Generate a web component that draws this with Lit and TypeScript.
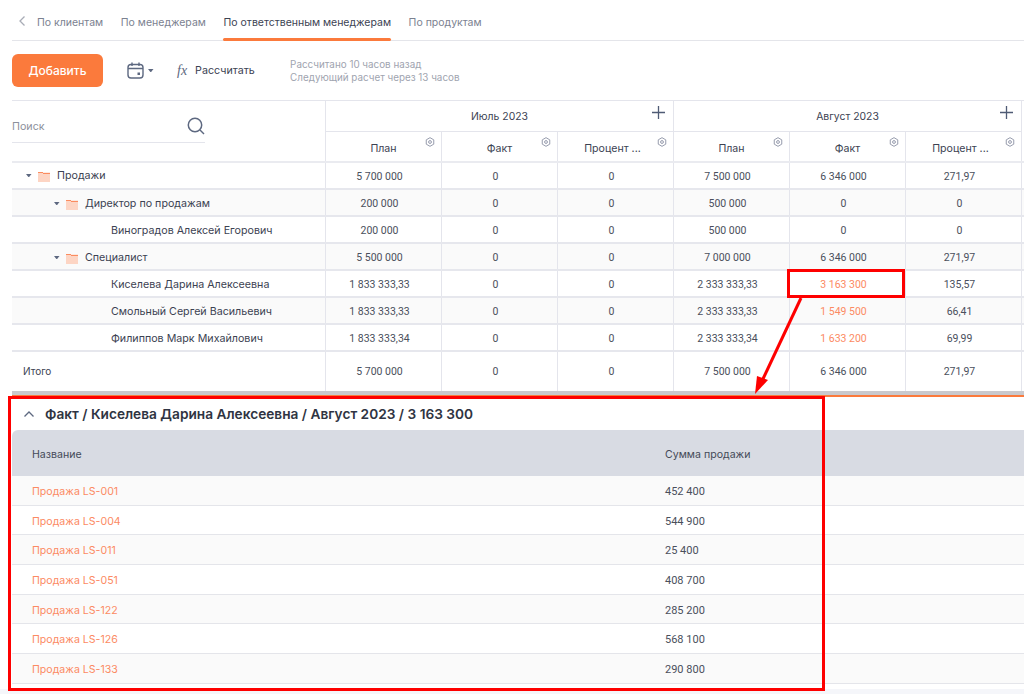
import { LitElement, html, css, svg } from "lit";
import { customElement } from "lit/decorators.js";

const rows = [
  { name: "Продажи", level: 0, folder: true, v: ["5 700 000", "0", "0", "7 500 000", "6 346 000", "271,97"] },
  { name: "Директор по продажам", level: 1, folder: true, v: ["200 000", "0", "0", "500 000", "0", "0"] },
  { name: "Виноградов Алексей Егорович", level: 2, folder: false, v: ["200 000", "0", "0", "500 000", "0", "0"] },
  { name: "Специалист", level: 1, folder: true, v: ["5 500 000", "0", "0", "7 000 000", "6 346 000", "271,97"] },
  { name: "Киселева Дарина Алексеевна", level: 2, folder: false, v: ["1 833 333,33", "0", "0", "2 333 333,33", "3 163 300", "135,57"], link: true },
  { name: "Смольный Сергей Васильевич", level: 2, folder: false, v: ["1 833 333,33", "0", "0", "2 333 333,33", "1 549 500", "66,41"], link: true },
  { name: "Филиппов Марк Михайлович", level: 2, folder: false, v: ["1 833 333,34", "0", "0", "2 333 333,34", "1 633 200", "69,99"], link: true },
];
const sales = [
  ["Продажа LS-001", "452 400"],
  ["Продажа LS-004", "544 900"],
  ["Продажа LS-011", "25 400"],
  ["Продажа LS-051", "408 700"],
  ["Продажа LS-122", "285 200"],
  ["Продажа LS-126", "568 100"],
  ["Продажа LS-133", "290 800"],
];

const gear = html`<svg class="gear" viewBox="0 0 12 12" width="10" height="10" fill="none" stroke="#8d93a5" stroke-width="1.100"><path d="M6 0.800l4.500 2.600v5.200L6 11.200 1.500 8.600V3.400z"/><circle cx="6" cy="6" r="1.700"/></svg>`;
const plus = html`<svg class="plus" viewBox="0 0 13 13" width="13" height="13" stroke="#4f5b75" stroke-width="1.300"><path d="M6.500 0v13M0 6.500h13"/></svg>`;
const caret = html`<svg class="caret" viewBox="0 0 8 5" width="5.500" height="3.500" fill="#5d6880"><path d="M0 0h8L4 5z"/></svg>`;
const folder = html`<svg class="folder" viewBox="0 0 12 10" width="12" height="10"><rect x="0" y="0.500" width="12" height="9.500" fill="#fdd5c4"/><rect x="0" y="0" width="5" height="1" fill="#fb8c60"/><rect x="5" y="1" width="7" height="1" fill="#fb8c60"/></svg>`;

@customElement("app-root")
export class AppRoot extends LitElement {
  static styles = css`
    :host { display: block; position: relative; width: 1024px; height: 694px; overflow: hidden; background: #fff;
      font-family: Inter, "Liberation Sans", sans-serif; font-size: 10.700px; color: #3c4252; }
    .tabs { display: flex; align-items: flex-start; height: 40px; margin-left: 12px; border-bottom: 1px solid #e4e5ea; }
    .back { width: 25px; padding: 16px 0 0 7px; box-sizing: border-box; }
    .tab { padding-top: 15px; margin-right: 17.600px; height: 40px; box-sizing: border-box; color: #7b8190; font-size: 10.500px; line-height: 15px; position: relative; white-space: nowrap; }
    .tab.active { color: #3c4252; }
    .tab.active::after { content: ""; position: absolute; left: 0; right: 0; bottom: -1px; height: 3px; border-radius: 2px; background: #fb7a3c; }
    .toolbar { display: flex; align-items: center; height: 59px; margin-left: 12px; }
    .add { width: 91px; height: 33px; border-radius: 6px; background: #fb7a3c; color: #fff; font-size: 12px; font-weight: 500; display: flex; align-items: center; justify-content: center; }
    .cal { display: flex; align-items: center; gap: 4px; margin-left: 24px; width: 50px; }
    .fx { font-family: "Liberation Serif", serif; font-style: italic; font-size: 14px; color: #5d6880; margin-right: 8px; }
    .calc { width: 95px; color: #3c4252; }
    .calcwrap { display: flex; align-items: center; }
    .info { color: #a0a4af; font-size: 9.850px; line-height: 13px; }
    .grid { margin-left: 12px; border-top: 1px solid #e4e5ec; }
    .head { display: flex; height: 62px; box-sizing: border-box; border-bottom: 2px solid #eaebf0; }
    .search { width: 313px; flex: none; box-sizing: border-box; }
    .searchbox { width: 193px; height: 42px; padding-top: 10px; border-bottom: 1px solid #e4e5ec; display: flex; align-items: center; justify-content: space-between; color: #8d919c; box-sizing: border-box; }
    .searchbox svg { margin-bottom: 2px; }
    .period { width: 348px; border-left: 1px solid #e4e5ec; box-sizing: border-box; flex: none; display: flex; flex-direction: column; }
    .period-title { height: 31px; border-bottom: 1px solid #e4e5ec; box-sizing: border-box; display: flex; align-items: center; justify-content: center; position: relative; font-size: 10.400px; }
    .plus { position: absolute; right: 8px; top: 5px; }
    .subs { display: flex; flex: 1; }
    .sub { width: 116px; flex: none; box-sizing: border-box; border-left: 1px solid #e4e5ec; display: flex; align-items: center; justify-content: center; position: relative; padding-top: 4px; font-size: 10.600px; }
    .sub:first-child { border-left: none; width: 115px; }
    .sub:last-child { padding-right: 6px; }
    .gear { position: absolute; right: 6px; top: 5px; }
    .row { display: flex; height: 27px; box-sizing: border-box; border-bottom: 2px solid #e6e7ed; }
    .row.alt { background: #fafafa; }
    .name { width: 313px; flex: none; display: flex; align-items: center; box-sizing: border-box; }
    .lvl0 { padding-left: 14px; } .lvl1 { padding: 2px 0 0 42px; } .lvl2 { padding: 2px 0 0 99px; }
    .caret { margin-right: 6.500px; flex: none; }
    .folder { margin-right: 7px; margin-top: 2px; flex: none; }
    .cell { width: 116px; flex: none; box-sizing: border-box; padding: 2px 8px 0 0; border-left: 1px solid #e4e5ec; display: flex; align-items: center; justify-content: center; color: #4a4f5c; font-family: Roboto, sans-serif; font-size: 10.500px; }
    .cell.link { color: #fc8a63; }
    .total { height: 39px; border-bottom: none; }
    .total .name { padding: 0 0 1px 11px; font-size: 10px; }
    .total .cell { padding: 0 8px 1px 0; }
    .bars { margin-left: 12px; height: 4px; background: #c9c9cd; }
    .oline { height: 2px; margin-left: 12px; background: #fb7a3c; }
    .panel { margin-left: 12px; }
    .ptitle { height: 33px; display: flex; align-items: center; font-size: 13.700px; font-weight: 600; color: #2f3442; gap: 11px; padding-left: 12px; box-sizing: border-box; }
    .thead { height: 46px; padding-top: 2px; box-sizing: border-box; background: #d8dbe3; border-radius: 6px 0 0 0; display: flex; align-items: center; color: #444a58; font-size: 10.600px; }
    .c1 { width: 653px; padding-left: 20px; box-sizing: border-box; flex: none; }
    .srow { display: flex; align-items: center; height: 29.700px; padding-top: 2px; box-sizing: border-box; border-bottom: 1px solid #e4e5ea; color: #4a4f5c; font-family: Roboto, sans-serif; font-size: 11px; }
    .srow:nth-child(odd) { background: #fafafa; }
    .srow .c1 { color: #fc8a63; font-family: Inter, sans-serif; font-size: 10.600px; }
    .foot { height: 5px; }
    .bottom { height: 10px; background: #f5f6fa; }
    .overlay { position: absolute; left: 0; top: 0; pointer-events: none; }
    .mark { position: absolute; border: 3px solid #fe0000; box-sizing: border-box; }
    .m1 { left: 787px; top: 269px; width: 118px; height: 29px; }
    .m2 { left: 8px; top: 396px; width: 817px; height: 295px; }
  `;

  period(title: string) {
    return html`<div class="period">
      <div class="period-title">${title}${plus}</div>
      <div class="subs">
        ${["План", "Факт", "Процент ..."].map((t) => html`<div class="sub">${t}${gear}</div>`)}
      </div>
    </div>`;
  }

  render() {
    return html`
      <div class="tabs">
        <div class="back"><svg viewBox="0 0 6 10" width="6" height="10" fill="none" stroke="#a8acb6" stroke-width="1.300"><path d="M5.500 0.500L1 5l4.500 4.500"/></svg></div>
        <div class="tab">По клиентам</div>
        <div class="tab">По менеджерам</div>
        <div class="tab active">По ответственным менеджерам</div>
        <div class="tab">По продуктам</div>
      </div>
      <div class="toolbar">
        <div class="add">Добавить</div>
        <div class="cal">
          <svg viewBox="0 0 17 17" width="17" height="17" fill="none" stroke="#5d6880" stroke-width="1.400"><rect x="1" y="2.500" width="15" height="13.500" rx="3"/><path d="M1 6.500h15M5 0.500v3.500M12 0.500v3.500"/><rect x="10.500" y="10.500" width="2.500" height="2.500" fill="#5d6880" stroke="none"/></svg>
          ${caret}
        </div>
        <div class="calcwrap"><span class="fx">fx</span><span class="calc">Рассчитать</span></div>
        <div class="info">Рассчитано 10 часов назад<br />Следующий расчет через 13 часов</div>
      </div>
      <div class="grid">
        <div class="head">
          <div class="search">
            <div class="searchbox">Поиск
              <svg viewBox="0 0 18 18" width="18" height="18" fill="none" stroke="#5d6880" stroke-width="1.500"><circle cx="8" cy="8" r="6.700"/><path d="M13 13l4 4"/></svg>
            </div>
          </div>
          ${this.period("Июль 2023")}${this.period("Август 2023")}
          <div class="period"></div>
        </div>
        ${rows.map((r, i) => html`<div class="row ${i % 2 ? "alt" : ""}">
          <div class="name lvl${r.level}">${r.folder ? html`${caret}${folder}` : ""}${r.name}</div>
          ${r.v.map((v, j) => html`<div class="cell ${r.link && j === 4 ? "link" : ""}">${v}</div>`)}
          <div class="cell"></div>
        </div>`)}
        <div class="row total">
          <div class="name">Итого</div>
          ${["5 700 000", "0", "0", "7 500 000", "6 346 000", "271,97"].map((v) => html`<div class="cell">${v}</div>`)}
          <div class="cell"></div>
        </div>
      </div>
      <div class="bars"></div>
      <div class="oline"></div>
      <div class="panel">
        <div class="ptitle">
          <svg viewBox="0 0 10 6" width="10" height="6" fill="none" stroke="#5d6880" stroke-width="1.300"><path d="M0.500 5.500L5 1l4.500 4.500"/></svg>
          Факт / Киселева Дарина Алексеевна / Август 2023 / 3 163 300
        </div>
        <div class="thead"><div class="c1">Название</div><div>Сумма продажи</div></div>
        <div>
          ${sales.map((s) => html`<div class="srow"><div class="c1">${s[0]}</div><div>${s[1]}</div></div>`)}
        </div>
        <div class="foot"></div>
      </div>
      <div class="bottom"></div>
      <div class="mark m1"></div>
      <div class="mark m2"></div>
      <svg class="overlay" width="1024" height="694" viewBox="0 0 1024 694">
        ${svg`<path d="M801 298L762 381" stroke="#fe0000" stroke-width="3" fill="none"/><path d="M755 394L757 376L768 380z" fill="#fe0000"/>`}
      </svg>
    `;
  }
}
